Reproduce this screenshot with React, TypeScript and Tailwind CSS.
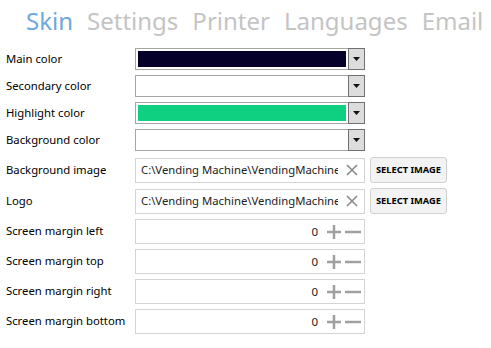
import React from 'react'

const font = { fontFamily: '"Segoe UI", "Noto Sans", "Open Sans", sans-serif' }

function Label({ children }: { children: React.ReactNode }) {
  return <div className="w-[129px] shrink-0 whitespace-nowrap text-[11.3px] text-black">{children}</div>
}

function ColorCombo({ color }: { color?: string }) {
  return (
    <div className="flex h-[22px] w-[230px] border border-[#a6a6a6] bg-white">
      <div className="flex-1 p-[2px]">
        {color && <div className="h-full w-full" style={{ background: color }} />}
      </div>
      <div className="-my-px -mr-px flex w-[17px] items-center justify-center border border-[#707070] bg-[#dddddd]">
        <svg width="7" height="4" viewBox="0 0 7 4">
          <path d="M0 0h7L3.5 4z" fill="#111" />
        </svg>
      </div>
    </div>
  )
}

function PathBox() {
  return (
    <div className="flex items-center gap-[5px]">
      <div className="flex h-[25px] w-[230px] items-center overflow-hidden border border-[#d4d4d4] bg-white pl-[5px] pr-[6px]">
        <div className="w-[197px] shrink-0 overflow-hidden whitespace-nowrap text-[11.3px] text-[#222]">
          C:\Vending Machine\VendingMachine
        </div>
        <svg width="12" height="12" viewBox="0 0 12 12" className="ml-auto shrink-0">
          <path d="M1 1l10 10M11 1L1 11" stroke="#8a8a8a" strokeWidth="1.6" />
        </svg>
      </div>
      <button className="h-[26px] w-[77px] whitespace-nowrap rounded-[3px] border border-[#d0d0d0] bg-[#f3f3f3] text-[9.3px] font-bold text-black">
        SELECT IMAGE
      </button>
    </div>
  )
}

function NumberBox() {
  return (
    <div className="flex h-[25px] w-[230px] items-center justify-end border border-[#d4d4d4] bg-white pr-[3px]">
      <span className="mr-[9px] text-[11.5px] text-[#222]">0</span>
      <svg width="14" height="14" viewBox="0 0 14 14">
        <path d="M7 0v14M0 7h14" stroke="#a0a0a0" strokeWidth="2.5" />
      </svg>
      <svg width="16" height="14" viewBox="0 0 16 14" className="ml-[4px]">
        <path d="M0 7h16" stroke="#a0a0a0" strokeWidth="2.5" />
      </svg>
    </div>
  )
}

export default function App() {
  const tabs = ['Skin', 'Settings', 'Printer', 'Languages', 'Email']
  return (
    <div className="h-[348px] w-[491px] overflow-hidden bg-white" style={font}>
      <div className="flex gap-[14px] pl-[26px] pt-[3px] text-[24px] leading-[35px]">
        {tabs.map((t, i) => (
          <span key={t} className={i === 0 ? 'text-[#6ea8dc]' : 'text-[#c4c4c4]'}>
            {t}
          </span>
        ))}
      </div>
      <div className="mt-[10px] flex flex-col pl-[6px]">
        <div className="flex flex-col gap-[5px]">
          {[
            ['Main color', '#04002a'],
            ['Secondary color', ''],
            ['Highlight color', '#0fd080'],
            ['Background color', ''],
          ].map(([l, c]) => (
            <div key={l} className="flex items-center">
              <Label>{l}</Label>
              <ColorCombo color={c || undefined} />
            </div>
          ))}
        </div>
        <div className="mt-[6px] flex flex-col gap-[5px]">
          {['Background image', 'Logo'].map(l => (
            <div key={l} className="flex items-center">
              <Label>{l}</Label>
              <PathBox />
            </div>
          ))}
          {['Screen margin left', 'Screen margin top', 'Screen margin right', 'Screen margin bottom'].map(l => (
            <div key={l} className="flex items-center">
              <Label>{l}</Label>
              <NumberBox />
            </div>
          ))}
        </div>
      </div>
    </div>
  )
}
